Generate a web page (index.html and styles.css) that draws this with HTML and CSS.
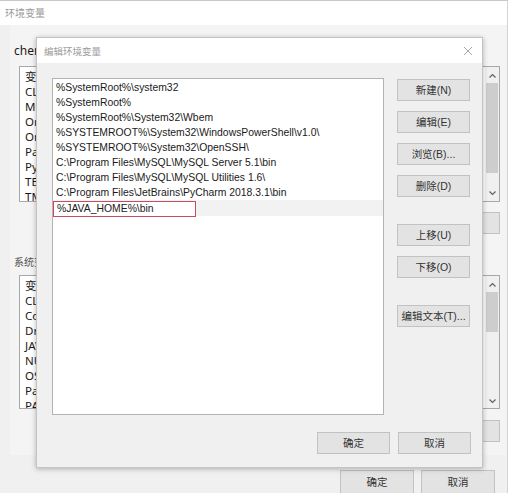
FILE: index.html
```html
<!DOCTYPE html>
<html lang="zh-CN">
<head>
<meta charset="utf-8">
<title>编辑环境变量</title>
<link rel="stylesheet" href="styles.css">
</head>
<body>
<div class="bgwin">
  <div class="bg-title">环境变量</div>
  <div class="panel">
    <div class="group-label first">chen 的用户变量(U)</div>
    <div class="bg-list list1">
      <div class="bg-items">
        <div class="bg-row">变量</div>
        <div class="bg-row">CLASSPATH</div>
        <div class="bg-row">MOZ_PLUGIN_PATH</div>
        <div class="bg-row">OneDrive</div>
        <div class="bg-row">OneDriveConsumer</div>
        <div class="bg-row">Path</div>
        <div class="bg-row">PyCharm</div>
        <div class="bg-row">TEMP</div>
        <div class="bg-row">TMP</div>
      </div>
      <div class="vscroll">
        <svg class="arrow" width="15" height="14" viewBox="0 0 15 14"><path d="M4.5 8.5 L7.5 5.5 L10.5 8.5" fill="none" stroke="#606060" stroke-width="1.2"/></svg>
        <div class="thumb t1"></div>
        <svg class="arrow" width="15" height="14" viewBox="0 0 15 14"><path d="M4.5 5.5 L7.5 8.5 L10.5 5.5" fill="none" stroke="#606060" stroke-width="1.2"/></svg>
      </div>
    </div>
    <div class="bg-btns">
      <button class="btn">新建(N)...</button>
      <button class="btn">编辑(E)...</button>
      <button class="btn">删除(D)</button>
    </div>
    <div class="group-label second">系统变量(S)</div>
    <div class="bg-list list2">
      <div class="bg-items">
        <div class="bg-row">变量</div>
        <div class="bg-row">CLASSPATH</div>
        <div class="bg-row">ComSpec</div>
        <div class="bg-row">DriverData</div>
        <div class="bg-row">JAVA_HOME</div>
        <div class="bg-row">NUMBER_OF_PROCESSORS</div>
        <div class="bg-row">OS</div>
        <div class="bg-row">Path</div>
        <div class="bg-row">PATHEXT</div>
      </div>
      <div class="vscroll">
        <svg class="arrow" width="15" height="14" viewBox="0 0 15 14"><path d="M4.5 8.5 L7.5 5.5 L10.5 8.5" fill="none" stroke="#606060" stroke-width="1.2"/></svg>
        <div class="thumb t2"></div>
        <svg class="arrow" width="15" height="14" viewBox="0 0 15 14"><path d="M4.5 5.5 L7.5 8.5 L10.5 5.5" fill="none" stroke="#606060" stroke-width="1.2"/></svg>
      </div>
    </div>
    <div class="bg-btns second-btns">
      <button class="btn">新建(W)...</button>
      <button class="btn">编辑(I)...</button>
      <button class="btn">删除(L)</button>
    </div>
  </div>
  <div class="bg-footer">
    <button class="btn foot">确定</button>
    <button class="btn foot">取消</button>
  </div>

  <div class="dialog">
    <div class="dlg-title">
      <span>编辑环境变量</span>
      <svg class="close" width="10" height="10" viewBox="0 0 10 10"><path d="M1 1 L9 9 M9 1 L1 9" stroke="#a8a8a8" stroke-width="1"/></svg>
    </div>
    <div class="dlg-body">
      <div class="paths">
        <div class="path">%SystemRoot%\system32</div>
        <div class="path">%SystemRoot%</div>
        <div class="path">%SystemRoot%\System32\Wbem</div>
        <div class="path">%SYSTEMROOT%\System32\WindowsPowerShell\v1.0\</div>
        <div class="path">%SYSTEMROOT%\System32\OpenSSH\</div>
        <div class="path">C:\Program Files\MySQL\MySQL Server 5.1\bin</div>
        <div class="path">C:\Program Files\MySQL\MySQL Utilities 1.6\</div>
        <div class="path">C:\Program Files\JetBrains\PyCharm 2018.3.1\bin</div>
        <div class="path selected"><span class="editing">%JAVA_HOME%\bin</span></div>
      </div>
      <div class="side">
        <button class="btn sbtn">新建(N)</button>
        <button class="btn sbtn">编辑(E)</button>
        <button class="btn sbtn">浏览(B)...</button>
        <button class="btn sbtn">删除(D)</button>
        <button class="btn sbtn gap">上移(U)</button>
        <button class="btn sbtn">下移(O)</button>
        <button class="btn sbtn gap">编辑文本(T)...</button>
      </div>
    </div>
    <div class="dlg-footer">
      <button class="btn dfoot">确定</button>
      <button class="btn dfoot">取消</button>
    </div>
  </div>
</div>
</body>
</html>
```

FILE: styles.css
```css
* { box-sizing: border-box; }
html, body { margin: 0; padding: 0; }
body {
  width: 508px;
  height: 493px;
  overflow: hidden;
  background: #f0f0f0;
  font-family: "Liberation Sans", "Noto Sans CJK SC", sans-serif;
  font-size: 11px;
  color: #1a1a1a;
}
.bgwin {
  position: relative;
  width: 508px;
  height: 493px;
  background: #f0f0f0;
  border-top: 1px solid #c9c9c9;
  border-right: 1px solid #d4d4d4;
}
.bg-title {
  height: 24px;
  background: #fff;
  color: #9a9a9a;
  font-family: "Noto Sans CJK SC", sans-serif;
  font-size: 10px;
  line-height: 24px;
  padding-left: 5px;
}
.panel {
  margin-left: 10px;
  height: 430px;
  background: #f4f4f4;
  padding-top: 18px;
  display: flex;
  flex-direction: column;
}
.group-label {
  padding-left: 4px;
  height: 15px;
  line-height: 15px;
  font-family: "Noto Sans", "Noto Sans CJK SC", sans-serif;
  font-size: 12px;
  color: #1a1a1a;
}
.group-label.second { margin-top: 21px; color: #555; font-size: 10px; }
.bg-list {
  margin-left: 9px;
  margin-right: 7px;
  background: #fff;
  border: 1px solid #a8a8a8;
  display: flex;
}
.list1 { height: 136px; margin-top: 8px; }
.list2 { height: 134px; margin-top: 5px; }
.bg-items { flex: 1; padding: 2px 0 0 5px; overflow: hidden; }
.bg-row {
  height: 15px;
  line-height: 15px;
  font-family: "Noto Sans", "Noto Sans CJK SC", sans-serif;
  font-size: 11.5px;
  white-space: nowrap;
}
.vscroll {
  width: 14px;
  background: #f0f0f0;
  display: flex;
  flex-direction: column;
  align-items: center;
  padding-top: 2px;
}
.arrow { flex: none; }
.thumb { width: 12px; background: #cdcdcd; }
.t1 { height: 90px; margin-bottom: 13px; }
.t2 { height: 42px; margin-bottom: 62px; }
.bg-btns {
  display: flex;
  justify-content: flex-end;
  gap: 8px;
  margin-top: 10px;
  margin-right: 7px;
}
.second-btns { margin-top: 11px; }
.btn {
  width: 73px;
  height: 22px;
  padding: 0;
  background: #e3e3e3;
  border: 1px solid #c2c2c2;
  color: #333;
  font-family: "Liberation Sans", "Noto Sans CJK SC", sans-serif;
  font-size: 10.5px;
  line-height: 20px;
  text-align: center;
}
.bg-footer {
  display: flex;
  justify-content: flex-end;
  gap: 7px;
  margin-top: 15px;
  padding-right: 12px;
}
.btn.foot { width: 74px; height: 24px; }

.dialog {
  position: absolute;
  left: 36px;
  top: 36px;
  width: 447px;
  height: 431px;
  background: #f0f0f0;
  border: 1px solid #c4c4c4;
  box-shadow: 0 1px 5px rgba(0,0,0,0.28);
}
.dlg-title {
  height: 25px;
  background: #fff;
  display: flex;
  align-items: center;
  justify-content: space-between;
  padding: 0 9px 0 7px;
  color: #9a9a9a;
  font-family: "Noto Sans CJK SC", sans-serif;
  font-size: 9.5px;
}
.dlg-body {
  display: flex;
  gap: 13px;
  padding: 15px 0 0 15px;
}
.paths {
  width: 332px;
  height: 337px;
  background: #fff;
  border: 1px solid #b4b4b4;
  padding-top: 1px;
}
.path {
  height: 15px;
  line-height: 15px;
  padding-left: 3px;
  font-family: "Liberation Sans", sans-serif;
  font-size: 10.4px;
  white-space: nowrap;
  color: #1a1a1a;
}
.path.selected {
  background: #f2f2f2;
  padding-left: 0;
  padding-top: 1px;
  height: 16px;
}
.editing {
  display: block;
  width: 143px;
  height: 16px;
  line-height: 14px;
  padding-left: 3px;
  border: 1.5px solid #cc4a5e;
  background: #fff;
}
.side {
  display: flex;
  flex-direction: column;
  padding-top: 1px;
}
.sbtn { margin-bottom: 10px; }
.sbtn.gap { margin-top: 17px; }
.dlg-footer {
  display: flex;
  justify-content: flex-end;
  gap: 8px;
  padding: 17px 11px 0 0;
}
.dfoot { height: 22px; }
```
